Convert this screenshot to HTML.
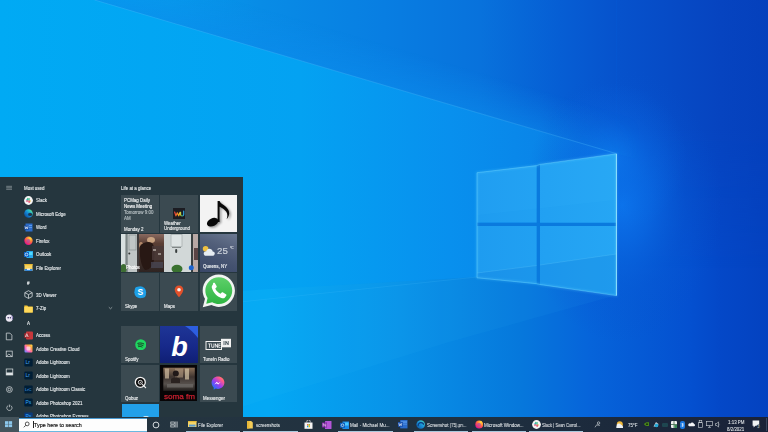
<!DOCTYPE html>
<html><head><meta charset="utf-8">
<style>
*{margin:0;padding:0;box-sizing:border-box}
html,body{width:768px;height:432px;overflow:hidden;-webkit-font-smoothing:antialiased;background:#0a84e0;font-family:"Liberation Sans",sans-serif}
#wall{position:absolute;left:0;top:0;width:768px;height:432px}
#start{position:absolute;left:0;top:177px;width:243px;height:240px;background:#25363e;overflow:hidden}
#task{position:absolute;left:0;top:417px;width:768px;height:15px;background:linear-gradient(90deg,#25353f 0%,#243440 25%,#1f3040 60%,#1c2a3c 78%,#1a2238 100%)}
.tk{will-change:transform;position:absolute;-webkit-text-stroke-width:.05px;color:#e6eaec;font-size:4.45px;line-height:5px;white-space:nowrap}
.ul{position:absolute;top:14px;height:1px;background:#a8c8dc}
.t{will-change:transform;position:absolute;color:#e6eaec;-webkit-text-stroke-width:.12px;font-size:4.45px;white-space:nowrap;line-height:5px}
.ic{position:absolute;width:9px;height:9px}
.tile{position:absolute;background:#3b4a51}
.tt{will-change:transform;position:absolute;-webkit-text-stroke-width:.12px;font-size:4.45px;line-height:5px;white-space:nowrap}
.ic svg{display:block}
</style></head><body>
<svg id="wall" width="768" height="432" viewBox="0 0 768 432">
<defs>
<linearGradient id="bg" x1="0" y1="0" x2="768" y2="0" gradientUnits="userSpaceOnUse"><stop offset="0.0000" stop-color="#00aaf4"/><stop offset="0.3516" stop-color="#04a8f4"/><stop offset="0.5208" stop-color="#0892e8"/><stop offset="0.6771" stop-color="#0678dc"/><stop offset="0.7682" stop-color="#0664da"/><stop offset="0.8984" stop-color="#0450d0"/><stop offset="0.9375" stop-color="#0448c8"/><stop offset="1.0000" stop-color="#0442c0"/></linearGradient>
<linearGradient id="beam" x1="0" y1="0" x2="617" y2="0" gradientUnits="userSpaceOnUse"><stop offset="0.0000" stop-color="#00aaf4"/><stop offset="0.4862" stop-color="#04a2f2"/><stop offset="0.7293" stop-color="#0890ee"/><stop offset="0.9400" stop-color="#0a80e6"/><stop offset="1.0000" stop-color="#0a7ce4"/></linearGradient>
<linearGradient id="wedge" x1="94" y1="0" x2="768" y2="0" gradientUnits="userSpaceOnUse"><stop offset="0.0000" stop-color="#04a2f0"/><stop offset="0.1128" stop-color="#069aec"/><stop offset="0.2463" stop-color="#088ce6"/><stop offset="0.4303" stop-color="#087ee2"/><stop offset="0.5727" stop-color="#0872dc"/><stop offset="0.6914" stop-color="#065ed4"/><stop offset="0.7804" stop-color="#0652cc"/><stop offset="0.9288" stop-color="#0644c0"/><stop offset="1.0000" stop-color="#0540bc"/></linearGradient>
<linearGradient id="vfade" x1="0" y1="0" x2="0" y2="432" gradientUnits="userSpaceOnUse">
<stop offset="0" stop-color="#fff"/><stop offset="0.3" stop-color="#fff"/><stop offset="0.62" stop-color="#000"/><stop offset="1" stop-color="#000"/>
</linearGradient>
<mask id="rmask" maskUnits="userSpaceOnUse" x="0" y="0" width="768" height="432"><rect x="0" y="0" width="768" height="432" fill="url(#vfade)"/></mask>
<linearGradient id="pane" x1="477" y1="0" x2="617" y2="0" gradientUnits="userSpaceOnUse">
<stop offset="0" stop-color="#1e9cf0"/>
<stop offset="1" stop-color="#26a6f4"/>
</linearGradient>
<radialGradient id="glow" gradientUnits="userSpaceOnUse" cx="622" cy="205" r="110" gradientTransform="translate(622 205) scale(0.9 1.25) translate(-622 -205)">
<stop offset="0" stop-color="#0c74ec" stop-opacity="1"/>
<stop offset="0.3" stop-color="#0a68e2" stop-opacity="0.75"/>
<stop offset="0.65" stop-color="#0858d4" stop-opacity="0.3"/>
<stop offset="1" stop-color="#0852cc" stop-opacity="0"/>
</radialGradient>
<radialGradient id="halo" gradientUnits="userSpaceOnUse" cx="612" cy="158" r="75"><stop offset="0" stop-color="#0c7aee" stop-opacity=".7"/><stop offset=".5" stop-color="#0a6ee6" stop-opacity=".3"/><stop offset="1" stop-color="#0a6ee6" stop-opacity="0"/></radialGradient>
<linearGradient id="band" gradientUnits="userSpaceOnUse" x1="400" y1="89.5" x2="411" y2="52"><stop offset="0" stop-color="#0c8cec" stop-opacity=".55"/><stop offset="1" stop-color="#0c8cec" stop-opacity="0"/></linearGradient>
<linearGradient id="hfade" gradientUnits="userSpaceOnUse" x1="540" y1="0" x2="640" y2="0"><stop offset="0" stop-color="#fff"/><stop offset="1" stop-color="#000"/></linearGradient>
<mask id="bmask" maskUnits="userSpaceOnUse" x="0" y="-50" width="768" height="300"><rect x="0" y="-50" width="768" height="300" fill="url(#hfade)"/></mask>
<filter id="eglow" x="-20%" y="-20%" width="140%" height="140%"><feGaussianBlur stdDeviation="1.2"/></filter>
</defs>
<rect width="768" height="432" fill="url(#bg)"/>
<polygon points="0,0 94.5,0 616,153.5 617,295 477,277 0,305" fill="url(#beam)"/>
<polygon points="94.5,0 616.4,0 616.4,153.6" fill="url(#wedge)"/>
<rect x="616.4" y="0" width="152" height="432" fill="url(#wedge)" mask="url(#rmask)"/>
<rect x="500" y="60" width="268" height="300" fill="url(#glow)"/>
<rect x="520" y="60" width="200" height="200" fill="url(#halo)"/>
<polygon points="94.5,0 616.4,153.6 680,172 720,40 200,-30" fill="url(#band)" mask="url(#bmask)"/>
<polygon points="477,277 617,295 446,343 200,420 0,430 0,305" fill="#40c8ff" fill-opacity="0.06"/>
<line x1="94.5" y1="0" x2="616" y2="153.5" stroke="#50c4ff" stroke-opacity="0.4" stroke-width="0.8"/>
<line x1="240" y1="302" x2="477" y2="277" stroke="#50c4ff" stroke-opacity="0.2" stroke-width="0.8"/>
<g fill="url(#pane)">
<polygon points="477,172.7 536.8,165.6 536.8,222.7 477,222.7"/>
<polygon points="540,164.4 616.4,153.8 616.4,223.5 540,223.5"/>
<polygon points="477,226 536.8,226 536.8,283.7 477,277.8"/>
<polygon points="540,226 616.4,226 616.4,295.6 540,284.5"/>
</g>
<polygon points="477,172.7 616.4,153.8 616.4,200 477,215" fill="#40c0ff" fill-opacity="0.08"/>
<path d="M477 273 L536.8 265.5 L540 265 L616.4 254 L616.4 295.6 L540 284.5 L536.8 283.7 L477 277.8Z" fill="#0a70d8" fill-opacity="0.22"/>
<path d="M477 273 L536.8 265.5 M540 265 L616.4 254" stroke="#7ad8ff" stroke-opacity="0.35" stroke-width="0.6"/>
<polygon points="536.8,165.6 540,164.4 540,284.5 536.8,283.7" fill="#0a7ade"/>
<polygon points="477,222.7 616.4,222.7 616.4,226 477,226" fill="#0a7ade"/>
<g fill="none" stroke="#58d0ff" stroke-width="1.8" stroke-opacity="0.3" filter="url(#eglow)">
<polygon points="477,172.7 536.8,165.6 540,164.4 616.4,153.8 616.4,295.6 540,284.5 536.8,283.7 477,277.8"/>
</g>
<g fill="none" stroke="#78dcff" stroke-width="0.7" stroke-opacity="0.55">
<polygon points="477,172.7 536.8,165.6 540,164.4 616.4,153.8 616.4,295.6 540,284.5 536.8,283.7 477,277.8"/>
</g>
<line x1="616.4" y1="153.8" x2="616.4" y2="295.6" stroke="#a0ecff" stroke-width="1" stroke-opacity=".85"/>
</svg>

<div id="start">
<div class="ic" style="left:24px;top:18.7px"><svg width="9" height="9" viewBox="0 0 9 9"><circle cx="4.5" cy="4.5" r="4.4" fill="#f4f4f4"/><rect x="2" y="3.3" width="2.6" height="1" rx=".5" fill="#36c5f0"/><rect x="3.3" y="1.8" width="1" height="2.6" rx=".5" fill="#2eb67d"/><rect x="4.4" y="4.6" width="2.6" height="1" rx=".5" fill="#ecb22e"/><rect x="4.6" y="4.4" width="1" height="2.6" rx=".5" fill="#e01e5a"/><rect x="4.6" y="2" width="1" height="2.4" rx=".5" fill="#2eb67d"/><rect x="2" y="4.6" width="2.4" height="1" rx=".5" fill="#e01e5a"/></svg></div><div class="t" style="left:36px;top:21.2px">Slack</div>
<div class="ic" style="left:24px;top:32.2px"><svg width="9" height="9" viewBox="0 0 9 9"><defs><linearGradient id="eg" x1="0.1" y1="0.9" x2="0.9" y2="0.1"><stop offset="0" stop-color="#0a4a98"/><stop offset=".45" stop-color="#1488d8"/><stop offset=".75" stop-color="#2cc0c8"/><stop offset="1" stop-color="#6ee07a"/></linearGradient></defs><circle cx="4.5" cy="4.5" r="4.3" fill="url(#eg)"/><ellipse cx="6" cy="5.4" rx="2.1" ry="1.6" fill="#12406e"/><ellipse cx="6.6" cy="5.6" rx="1.5" ry="1.1" fill="#25363e"/></svg></div><div class="t" style="left:36px;top:34.7px">Microsoft Edge</div>
<div class="ic" style="left:24px;top:45.8px"><svg width="9" height="9" viewBox="0 0 9 9"><rect x="1.5" y="0.5" width="7" height="8" fill="#2b6ccc"/><rect x="2" y="2" width="6" height="1" fill="#5b9ae8"/><rect x="2" y="4" width="6" height="1" fill="#5b9ae8"/><rect x="0.3" y="2.3" width="4.5" height="4.5" fill="#1a4fa5"/><path d="M1 3.3l.7 2.6.8-2 .8 2 .7-2.6" fill="none" stroke="#fff" stroke-width=".6"/></svg></div><div class="t" style="left:36px;top:48.3px">Word</div>
<div class="ic" style="left:24px;top:59.2px"><svg width="9" height="9" viewBox="0 0 9 9"><defs><radialGradient id="fg" cx=".7" cy=".2" r="1"><stop offset="0" stop-color="#ffde3a"/><stop offset=".45" stop-color="#ff7139"/><stop offset=".8" stop-color="#e31587"/><stop offset="1" stop-color="#9059ff"/></radialGradient></defs><circle cx="4.5" cy="4.8" r="4.2" fill="url(#fg)"/><circle cx="4.3" cy="5" r="2" fill="#a535c8" opacity=".6"/></svg></div><div class="t" style="left:36px;top:61.7px">Firefox</div>
<div class="ic" style="left:24px;top:72.7px"><svg width="9" height="9" viewBox="0 0 9 9"><rect x="2.5" y="1" width="6.5" height="7" fill="#28a8ea"/><rect x="4" y="2" width="4.5" height="3" fill="#50d9ff"/><rect x="0" y="2" width="5" height="5" fill="#0a64c8"/><circle cx="2.5" cy="4.5" r="1.4" fill="none" stroke="#fff" stroke-width=".7"/></svg></div><div class="t" style="left:36px;top:75.2px">Outlook</div>
<div class="ic" style="left:24px;top:86.2px"><svg width="9" height="9" viewBox="0 0 9 9"><rect x="0.5" y="1" width="8" height="7" fill="#f8d460"/><rect x="0.5" y="1" width="8" height="1.3" fill="#e8b830"/><rect x="0.5" y="6" width="8" height="2" fill="#3a8ad8"/><rect x="3" y="5.6" width="3" height="1.2" fill="#fff"/></svg></div><div class="t" style="left:36px;top:88.7px">File Explorer</div>
<div class="t" style="left:26.5px;top:103.6px">#</div>
<div class="ic" style="left:24px;top:113.1px"><svg width="9" height="9" viewBox="0 0 9 9"><path d="M4.5.7L8.2 2.7V6.5L4.5 8.4.8 6.5V2.7Z M.8 2.7L4.5 4.6 8.2 2.7 M4.5 4.6V8.4" fill="none" stroke="#e8ecee" stroke-width=".7"/></svg></div><div class="t" style="left:36px;top:115.6px">3D Viewer</div>
<div class="ic" style="left:24px;top:126.6px"><svg width="9" height="9" viewBox="0 0 9 9"><path d="M.3 1.5h3l.8 1h4.6v6H.3z" fill="#f8c838"/><rect x="0.3" y="3" width="8.4" height="5.5" fill="#ffd95a"/></svg></div><div class="t" style="left:36px;top:129.1px">7-Zip</div>
<div class="t" style="left:26.5px;top:143.6px">A</div>
<div class="ic" style="left:24px;top:153.5px"><svg width="9" height="9" viewBox="0 0 9 9"><rect x="2" y="0.5" width="7" height="8" rx="1" fill="#c8383c"/><rect x="0.3" y="2.2" width="5" height="4.6" fill="#a4262c"/><path d="M1.3 6l1.5-3.4L4.3 6M1.8 5h2" fill="none" stroke="#fff" stroke-width=".6"/></svg></div><div class="t" style="left:36px;top:156.0px">Access</div>
<div class="ic" style="left:24px;top:167.0px"><svg width="9" height="9" viewBox="0 0 9 9"><defs><linearGradient id="ccg" x1="0" y1="1" x2="1" y2="0"><stop offset="0" stop-color="#4a90ff"/><stop offset=".35" stop-color="#ff61c8"/><stop offset=".7" stop-color="#ff9f40"/><stop offset="1" stop-color="#ffe34a"/></linearGradient></defs><rect x="0.5" y="0.5" width="8" height="8" rx="1" fill="url(#ccg)"/><rect x="2.5" y="2.5" width="4" height="4" rx="1" fill="#fff" opacity=".6"/></svg></div><div class="t" style="left:36px;top:169.5px">Adobe Creative Cloud</div>
<div class="ic" style="left:24px;top:180.5px"><svg width="9" height="9" viewBox="0 0 9 9"><rect x="0.3" y="0.5" width="8.4" height="8" rx="1" fill="#001e36"/><text x="1.6" y="6.4" font-family="Liberation Sans" font-size="5" fill="#4aa8f0">Lr</text></svg></div><div class="t" style="left:36px;top:183.0px">Adobe Lightroom</div>
<div class="ic" style="left:24px;top:194.0px"><svg width="9" height="9" viewBox="0 0 9 9"><rect x="0.3" y="0.5" width="8.4" height="8" rx="1" fill="#001e36"/><text x="1.6" y="6.4" font-family="Liberation Sans" font-size="5" fill="#4aa8f0">Lr</text></svg></div><div class="t" style="left:36px;top:196.5px">Adobe Lightroom</div>
<div class="ic" style="left:24px;top:207.5px"><svg width="9" height="9" viewBox="0 0 9 9"><rect x="0.3" y="0.5" width="8.4" height="8" rx="1" fill="#001e36"/><text x="0.9" y="6.4" font-family="Liberation Sans" font-size="4.2" fill="#4aa8f0">LrC</text></svg></div><div class="t" style="left:36px;top:210.0px">Adobe Lightroom Classic</div>
<div class="ic" style="left:24px;top:221.0px"><svg width="9" height="9" viewBox="0 0 9 9"><rect x="0.3" y="0.5" width="8.4" height="8" rx="1" fill="#001e36"/><text x="1.4" y="6.4" font-family="Liberation Sans" font-size="5" fill="#31a8ff">Ps</text></svg></div><div class="t" style="left:36px;top:223.5px">Adobe Photoshop 2021</div>
<div class="ic" style="left:24px;top:234.5px"><svg width="9" height="9" viewBox="0 0 9 9"><rect x="0.3" y="0.5" width="8.4" height="8" rx="1" fill="#0a3a7a"/><text x="1.4" y="6.4" font-family="Liberation Sans" font-size="5" fill="#31a8ff">Ps</text></svg></div><div class="t" style="left:36px;top:237.0px">Adobe Photoshop Express</div>
<div class="t" style="left:24px;top:8.6px">Most used</div>
<div class="t" style="left:121px;top:8.6px">Life at a glance</div>


<svg style="position:absolute;left:0;top:0" width="20" height="240" viewBox="0 0 20 240">
<g fill="none" stroke="#dfe4e6" stroke-width=".7">
<path d="M6.2 9.3h5.8M6.2 10.8h5.8M6.2 12.3h5.8" stroke-width=".5" stroke-opacity=".85"/>
<path d="M6.3 156.1h3.6l2 2v4.7H6.3z"/>
<rect x="6.2" y="174.1" width="6" height="5.6"/>
<path d="M6.6 179.2l2.3-2.2 3 2.4"/>
<rect x="6.2" y="192" width="6.6" height="6"/>
<circle cx="9.4" cy="212.5" r="2.9"/>
<circle cx="9.4" cy="212.5" r="1.3"/>
<path d="M8.1 228.6a2.6 2.6 0 1 0 2.6 0M9.4 227.6v2.6"/>
</g>
<rect x="6.2" y="195.5" width="6.6" height="2.5" fill="#dfe4e6"/>
<circle cx="9.3" cy="141.1" r="3.6" fill="#ece8f4"/>
<circle cx="8.2" cy="140.8" r=".8" fill="#3a3060"/>
<circle cx="10.4" cy="140.8" r=".8" fill="#3a3060"/>
<path d="M11.5 138.5a3.3 3.3 0 0 1 .8 4" stroke="#6a5aa8" stroke-width=".8" fill="none"/>
<path d="M108.5 130.2l1.6 1.5 1.6-1.5" stroke="#c0c8cc" stroke-width=".6" fill="none"/>
</svg>
<svg style="position:absolute;left:108px;top:129px" width="5" height="4" viewBox="0 0 5 4"><path d="M.8 1.2l1.7 1.6 1.7-1.6" stroke="#c8cfd2" stroke-width=".6" fill="none"/></svg>
<!-- tiles group 1 -->
<div class="tile" style="left:121px;top:18px;width:37.6px;height:37.7px"></div>
<div class="tt" style="left:124px;top:20.8px;color:#f0f2f3">PCMag Daily</div>
<div class="tt" style="left:124px;top:26.6px;color:#ffffff">News Meeting</div>
<div class="tt" style="left:124px;top:33.0px;color:#b8c0c4">Tomorrow 9:00</div>
<div class="tt" style="left:124px;top:39.4px;color:#b8c0c4">AM</div>
<div class="tt" style="left:124px;top:49.6px;color:#f0f2f3">Monday 2</div>

<div class="tile" style="left:160.2px;top:18px;width:37.8px;height:37.7px"></div>
<div style="position:absolute;left:173px;top:30.5px;width:12.3px;height:11.2px;background:#1c1c22"></div>
<svg style="position:absolute;left:173px;top:30.5px" width="12.3" height="11.2" viewBox="0 0 12.3 11.2"><defs><linearGradient id="wug" x1="0" x2="1"><stop offset="0" stop-color="#e83a3a"/><stop offset=".35" stop-color="#f09020"/><stop offset=".6" stop-color="#e8d030"/><stop offset=".8" stop-color="#50c060"/><stop offset="1" stop-color="#2a9ee8"/></linearGradient></defs><path d="M1.6 4l1.3 3.8 1.4-3 1.4 3 1.3-3.4M7.6 4.3v2.2c0 1.3 1.1 1.5 1.6 1.5s1.5-.3 1.5-1.5V3" fill="none" stroke="url(#wug)" stroke-width="1.2" stroke-linecap="round" stroke-linejoin="round"/></svg>
<div class="tt" style="left:163.7px;top:43.6px;color:#f0f2f3">Weather</div>
<div class="tt" style="left:163.7px;top:49.3px;color:#f0f2f3">Underground</div>

<div class="tile" style="left:199.6px;top:18.2px;width:37.6px;height:37.2px;background:#f3f3f3"></div>
<svg style="position:absolute;left:199.6px;top:18.2px" width="37.6" height="37.2" viewBox="0 0 37.6 37.2">
<defs><filter id="nsh" x="-50%" y="-50%" width="200%" height="200%"><feGaussianBlur stdDeviation="1.3"/></filter></defs>
<g transform="translate(1.6 1.2)" opacity=".4" filter="url(#nsh)"><ellipse cx="12.6" cy="27.2" rx="6" ry="3.9" transform="rotate(-25 12.6 27.2)" fill="#000"/><path d="M17.6 27V6h2c1.4 4 9.8 5.5 9.6 12.5-.1 2.2-1 4-2.6 5.8 1.1-2.6 1.1-5.5-.4-7.8-1.6-2.4-5-3.8-6.6-4.8V27z" fill="#000"/></g>
<ellipse cx="12.6" cy="27.2" rx="6" ry="3.9" transform="rotate(-25 12.6 27.2)" fill="#080808"/>
<path d="M17.6 27V6h2c1.4 4 9.8 5.5 9.6 12.5-.1 2.2-1 4-2.6 5.8 1.1-2.6 1.1-5.5-.4-7.8-1.6-2.4-5-3.8-6.6-4.8V27z" fill="#080808"/>
</svg>

<!-- photos wide tile -->
<div style="position:absolute;left:121.2px;top:57px;width:76.9px;height:37.6px;overflow:hidden;background:#c8ccca">
<svg width="77" height="38" viewBox="0 0 77 38">
<defs>
<linearGradient id="wall1" x1="0" x2="0" y1="0" y2="1"><stop offset="0" stop-color="#d0d6d6"/><stop offset="1" stop-color="#b8bebe"/></linearGradient>
<linearGradient id="intr" x1="0" x2="0" y1="0" y2="1"><stop offset="0" stop-color="#8a6a60"/><stop offset=".25" stop-color="#5a3e34"/><stop offset="1" stop-color="#2e2422"/></linearGradient>
</defs>
<rect width="77" height="38" fill="url(#wall1)"/>
<rect x="0" y="0" width="4" height="38" fill="#d8e0e0"/>
<rect x="4.5" y="0" width="2.2" height="38" fill="#7a8484"/>
<rect x="7" y="0" width="9" height="38" fill="#c0c6c6"/>
<rect x="8" y="1" width="7" height="15" fill="none" stroke="#8a9292" stroke-width=".7"/>
<circle cx="8.3" cy="19.5" r="1" fill="#303434"/>
<rect x="16" y="0" width="2" height="38" fill="#3e3a3a"/>
<rect x="18" y="0" width="26" height="38" fill="url(#intr)"/>
<ellipse cx="30" cy="6" rx="4" ry="3" fill="#e0b890" opacity=".8"/>
<ellipse cx="20" cy="11" rx="2" ry="3" fill="#d8a880" opacity=".7"/>
<path d="M19 12c3-4 9-5 12-3 3 3 3 10 2 17-1 5-4 10-9 10-4-4-6-14-5-24z" fill="#281814"/>
<rect x="31" y="12" width="12" height="14" fill="#4a3a38" opacity=".8"/>
<rect x="32" y="15" width="3" height="2" fill="#d0c8c0" opacity=".6"/>
<rect x="37" y="19" width="3" height="2" fill="#c8c0b8" opacity=".6"/>
<rect x="30" y="28" width="12" height="6" fill="#4a4a58" opacity=".7"/>
<rect x="43" y="0" width="6" height="38" fill="#ccd2d2"/>
<rect x="49" y="0" width="21" height="38" fill="#d2d8d8"/>
<rect x="50" y="0.5" width="11" height="12" fill="#dde3e3" stroke="#9aa2a2" stroke-width=".6"/>
<path d="M51 13.5h9" stroke="#606666" stroke-width=".7"/>
<rect x="54.2" y="15" width="2" height="4" rx="1" fill="#383e3e"/>
<rect x="70" y="0" width="2" height="38" fill="#3a4040"/>
<rect x="72" y="0" width="5" height="38" fill="#b8a8a4"/>
<rect x="73" y="14" width="4" height="12" fill="#5a4444"/>
<ellipse cx="2.5" cy="34.5" rx="3" ry="4.5" fill="#3e6e34"/>
<ellipse cx="56" cy="35" rx="5.5" ry="4.2" fill="#3a7230"/>
<circle cx="70.3" cy="33.8" r="2.5" fill="#1a64d0"/>
</svg>
<div class="tt" style="left:4.6px;top:30.8px;color:#fff">Photos</div>
</div>

<!-- weather queens -->
<div style="position:absolute;left:199.6px;top:57px;width:37.6px;height:37.6px;background:linear-gradient(200deg,#6a7890 0%,#525f7a 35%,#445270 65%,#3a4868 100%);overflow:hidden">
<svg width="38" height="38" viewBox="0 0 38 38" style="position:absolute;left:0;top:0">
<circle cx="5.6" cy="14.8" r="2.8" fill="#f0c040"/>
<path d="M4.2 21.8h8.2c1.5 0 2.4-1 2.4-2.2s-.9-2.1-2.1-2.1c-.3-1.7-1.7-2.7-3.2-2.7-1.7 0-2.9 1.2-3.2 2.5-1.5 0-2.6 1-2.6 2.2s.9 2.3 2 2.3z" fill="#e6ecf2"/>
</svg>
<div class="tt" style="left:17.8px;top:11.6px;font-size:9.7px;line-height:10px;color:#dfe4ea;opacity:.88">25</div>
<div class="tt" style="left:30.4px;top:12.2px;font-size:3.2px;line-height:4px;color:#dfe4ea">°C</div>
<div class="tt" style="left:3px;top:30.4px;color:#f4f6f8">Queens, NY</div>
</div>

<div class="tile" style="left:121px;top:96px;width:37.6px;height:37.5px"></div>
<svg style="position:absolute;left:134px;top:109px" width="12.5" height="12.5" viewBox="0 0 12.5 12.5"><circle cx="6.25" cy="6.25" r="5.9" fill="#1ea0e8"/><circle cx="3.8" cy="3.8" r="3" fill="#1ea0e8"/><circle cx="8.7" cy="8.7" r="3" fill="#1ea0e8"/><text x="6.25" y="9.2" text-anchor="middle" font-family="Liberation Sans" font-weight="bold" font-size="8.5" fill="#fff">S</text></svg>
<div class="tt" style="left:124.6px;top:126.6px;color:#f0f2f3">Skype</div>

<div class="tile" style="left:160.2px;top:96px;width:37.8px;height:37.5px"></div>
<svg style="position:absolute;left:173.9px;top:108.4px" width="10" height="12.7" viewBox="0 0 11 14"><path d="M5.5.5C2.7.5.8 2.6.8 5.2c0 3.2 4.7 8.3 4.7 8.3s4.7-5.1 4.7-8.3C10.2 2.6 8.3.5 5.5.5z" fill="#e2502a"/><circle cx="5.5" cy="5.2" r="2" fill="#f8f0ec"/></svg>
<div class="tt" style="left:163.5px;top:126.6px;color:#f0f2f3">Maps</div>

<div class="tile" style="left:199.6px;top:96px;width:37.6px;height:37.5px"></div>
<svg style="position:absolute;left:199.6px;top:96px" width="37.6" height="37.5" viewBox="0 0 37.6 37.5">
<defs><linearGradient id="wag" x1="0" y1="0" x2="0" y2="1"><stop offset="0" stop-color="#5ed06a"/><stop offset="1" stop-color="#2eb542"/></linearGradient></defs>
<g transform="translate(18.8 17.6) scale(1.17) translate(-18 -18)">
<path d="M18 4.2c-7.6 0-13.8 6.1-13.8 13.7 0 2.6.7 5 2 7.1L4.3 32.3l7.5-1.9c1.9 1 4 1.6 6.2 1.6 7.6 0 13.8-6.1 13.8-13.8S25.6 4.2 18 4.2z" fill="#f2f4f2"/>
<path d="M18 6.5c-6.4 0-11.5 5.1-11.5 11.4 0 2.4.7 4.6 1.9 6.5L7.3 29.2l5.1-1.3c1.7 1 3.6 1.5 5.6 1.5 6.4 0 11.5-5.1 11.5-11.5S24.4 6.5 18 6.5z" fill="url(#wag)"/>
<path d="M13.2 11.5c.4-.4 1.1-.4 1.4.1l1.5 2.4c.3.5.2 1-.2 1.4l-.9.8c.8 2 2.4 3.6 4.4 4.5l.9-.9c.4-.4 1-.5 1.4-.2l2.4 1.5c.5.3.6 1 .2 1.4l-1 1.3c-.6.7-1.6 1-2.5.7-4.2-1.3-7.4-4.6-8.7-8.8-.3-.9 0-1.9.7-2.5z" fill="#fff"/>
</g></svg>

<!-- group 2 -->
<div class="tile" style="left:121px;top:148.5px;width:37.6px;height:37.5px"></div>
<svg style="position:absolute;left:134.5px;top:161.5px" width="11.5" height="11.5" viewBox="0 0 11.5 11.5"><circle cx="5.75" cy="5.75" r="5.5" fill="#1ed760"/><path d="M2.8 4.3c2-.6 4.3-.4 6 .6M3.2 6c1.6-.4 3.4-.3 4.8.5M3.6 7.6c1.2-.3 2.4-.2 3.5.4" fill="none" stroke="#191414" stroke-width=".8" stroke-linecap="round"/></svg>
<div class="tt" style="left:124.6px;top:180.2px;color:#f0f2f3">Spotify</div>

<div style="position:absolute;left:160.2px;top:148.8px;width:37.8px;height:37.2px;background:linear-gradient(180deg,#1e3596 0%,#17298a 55%,#0f1f74 100%);overflow:hidden">
<svg width="38" height="38" viewBox="0 0 38 38" style="position:absolute;left:0;top:0">
<path d="M25 0H38V12C34 7 30 3 25 0z" fill="#2d5ee0"/>
<text x="19.5" y="30" text-anchor="middle" font-family="Liberation Sans" font-style="italic" font-weight="bold" font-size="27" fill="#fff">b</text>
</svg>
</div>

<div class="tile" style="left:199.6px;top:148.5px;width:37.6px;height:37.5px"></div>
<svg style="position:absolute;left:205px;top:161px" width="27" height="12" viewBox="0 0 27 12">
<rect x="1" y="3.5" width="15.5" height="8" fill="none" stroke="#f2f2f2" stroke-width="1"/>
<g fill="#f2f2f2"><path d="M3.2 5.6h2.6v.7h-.9v3.4h-.8V6.3h-.9z"/><path d="M6.3 5.6h.8v2.6c0 .5.3.8.7.8s.7-.3.7-.8V5.6h.8v2.6c0 1-.6 1.6-1.5 1.6S6.3 9.2 6.3 8.2z"/><path d="M9.8 5.6h.8l1.6 2.7V5.6h.8v4.1h-.8l-1.6-2.7v2.7h-.8z"/><path d="M13.4 5.6h2.2v.7h-1.4v.95h1.3v.7h-1.3v1h1.4v.7h-2.2z"/></g>
<rect x="16" y="0.8" width="10" height="8.5" fill="#f2f2f2"/>
<g fill="#34444c"><rect x="18.6" y="3" width=".8" height="4.1"/><path d="M20.4 3h.8l1.6 2.7V3h.8v4.1h-.8l-1.6-2.7v2.7h-.8z"/></g>
</svg>
<div class="tt" style="left:203.2px;top:180.4px;color:#f0f2f3">TuneIn Radio</div>

<div class="tile" style="left:121px;top:187.5px;width:37.6px;height:37.5px"></div>
<svg style="position:absolute;left:134px;top:199px" width="13" height="13" viewBox="0 0 13 13"><circle cx="6.3" cy="6.3" r="5" fill="#0c0c0c" stroke="#f2f2f2" stroke-width="1.3"/><circle cx="6.3" cy="6.3" r="2" fill="none" stroke="#f2f2f2" stroke-width=".9"/><circle cx="6.3" cy="6.3" r=".6" fill="#f2f2f2"/><path d="M8.6 8.6l3 3" stroke="#f2f2f2" stroke-width="1.3" stroke-linecap="round"/></svg>
<div class="tt" style="left:124.6px;top:218.9px;color:#f0f2f3">Qobuz</div>

<div style="position:absolute;left:160.3px;top:188px;width:37px;height:36.2px;background:#070506;overflow:hidden">
<svg width="37" height="37" viewBox="0 0 37 37" style="position:absolute;left:0;top:0">
<defs><linearGradient id="sph" x1="0" y1="0" x2="0" y2="1"><stop offset="0" stop-color="#8a7058"/><stop offset=".4" stop-color="#3e3430"/><stop offset=".7" stop-color="#56504c"/><stop offset="1" stop-color="#221e1c"/></linearGradient></defs>
<rect x="3.3" y="2.7" width="31.5" height="23.2" fill="url(#sph)"/>
<rect x="5" y="3.5" width="4" height="10" fill="#c8b49a" opacity=".75"/>
<rect x="15" y="3.5" width="8" height="9" fill="#b09a80" opacity=".6"/>
<rect x="25" y="3.5" width="4" height="11" fill="#d8c8a8" opacity=".7"/>
<circle cx="15.8" cy="8.6" r="3" fill="#201818"/>
<path d="M11 14c2-2 7-2 9 0v4h-9z" fill="#2a2220"/>
<rect x="7" y="19" width="26" height="3.5" fill="#6a6664" opacity=".8"/>
</svg>
<div class="tt" style="left:3.5px;top:27px;font-size:8.1px;line-height:9px;color:#cc2030;-webkit-text-stroke:.25px #cc2030">soma fm</div>
</div>

<div class="tile" style="left:199.6px;top:187.5px;width:37.6px;height:37.5px"></div>
<svg style="position:absolute;left:210.7px;top:199px" width="14" height="14" viewBox="0 0 14 14"><defs><linearGradient id="msg" x1="0.1" y1="0.95" x2="0.9" y2="0.05"><stop offset="0" stop-color="#0a7cff"/><stop offset=".45" stop-color="#9a3cf0"/><stop offset=".8" stop-color="#ff5a8a"/><stop offset="1" stop-color="#ff8a5a"/></linearGradient></defs><path d="M7 .5C3.4.5.6 3.2.6 6.8c0 1.9.8 3.5 2.1 4.7v2.2l2-1.1c.7.2 1.5.3 2.3.3 3.6 0 6.4-2.7 6.4-6.3S10.6.5 7 .5z" fill="url(#msg)"/><path d="M3.3 8.6l2.5-2.8 1.4 1.4 2.5-1.4-2.5 2.8-1.4-1.4z" fill="#fff"/></svg>
<div class="tt" style="left:203.2px;top:218.9px;color:#f0f2f3">Messenger</div>

<div style="position:absolute;left:121.5px;top:226.8px;width:37.9px;height:14px;background:#22a0ea;overflow:hidden"><div style="position:absolute;left:21px;top:12.6px;width:6px;height:4px;border-radius:2px;background:#c8e8fa"></div></div>
</div>
<div id="task">
<div style="position:absolute;left:0;top:0;width:18.5px;height:15px;background:#44545c"></div>
<svg style="position:absolute;left:5.3px;top:4.3px" width="7.4" height="6.4" viewBox="0 0 8 6.5"><g fill="#8cc8ec"><rect x="0" y="0" width="3.6" height="3"/><rect x="4.1" y="0" width="3.6" height="3"/><rect x="0" y="3.4" width="3.6" height="3"/><rect x="4.1" y="3.4" width="3.6" height="3"/></g></svg>
<div style="position:absolute;left:18.5px;top:0.6px;width:128px;height:14.2px;background:#fdfdfd;border-top:1px solid #4a9ad0;border-bottom:1px solid #6ab8e0"></div>
<svg style="position:absolute;left:22.5px;top:4px" width="7" height="7" viewBox="0 0 7 7"><circle cx="4.2" cy="2.9" r="1.9" fill="none" stroke="#222" stroke-width=".75"/><path d="M2.8 4.3L.8 6.3" stroke="#222" stroke-width=".8"/></svg>
<div style="position:absolute;left:32.8px;top:4.2px;width:.5px;height:6.5px;background:#222"></div>
<div class="tk" style="left:33.5px;top:4.5px;font-size:5.4px;line-height:6px;color:#111;-webkit-text-stroke:.15px #111">Type here to search</div>
<svg style="position:absolute;left:152px;top:3.5px" width="8" height="8" viewBox="0 0 8 8"><circle cx="4" cy="4" r="2.9" fill="none" stroke="#e8ecee" stroke-width=".9"/></svg>
<svg style="position:absolute;left:170px;top:4px" width="8" height="7" viewBox="0 0 8 7"><g fill="none" stroke="#dfe4e6" stroke-width=".7"><rect x=".8" y="1" width="3.5" height="2"/><rect x=".8" y="4" width="3.5" height="2"/><path d="M5.8.5v6M7.2.5v6"/></g></svg>

<svg style="position:absolute;left:188.3px;top:4.2px" width="8.5" height="6.2" viewBox="0 0 8.5 6.2"><rect x="0" y="0" width="8.5" height="6.2" fill="#f8d668"/><rect x="0" y="0" width="8.5" height="1.2" fill="#e6b838"/><rect x="1" y="3.6" width="6.5" height="2" fill="#5a9ad0"/></svg>
<div class="tk" style="left:198.2px;top:6.2px">File Explorer</div>
<div class="ul" style="left:185.7px;width:54.6px"></div>

<svg style="position:absolute;left:246.7px;top:4px" width="6" height="7.5" viewBox="0 0 6 7.5"><path d="M0 0h4.2l1.6 1.5V7.5H0z" fill="#f4cc58"/><rect x="0" y="0" width="2.5" height="7.5" fill="#e8b838"/></svg>
<div class="tk" style="left:255.6px;top:6.2px">screenshots</div>
<div class="ul" style="left:243.2px;width:55px"></div>

<svg style="position:absolute;left:303.8px;top:3px" width="9" height="9" viewBox="0 0 9 9"><path d="M2.8 2.5V1.5a1.7 1.7 0 0 1 3.4 0v1" fill="none" stroke="#f4f4f4" stroke-width=".7"/><rect x=".5" y="2.5" width="8" height="6.3" fill="#f4f4f4"/><rect x="3" y="4.2" width="1.4" height="1.4" fill="#f25022"/><rect x="4.6" y="4.2" width="1.4" height="1.4" fill="#7fba00"/><rect x="3" y="5.8" width="1.4" height="1.4" fill="#00a4ef"/><rect x="4.6" y="5.8" width="1.4" height="1.4" fill="#ffb900"/></svg>

<svg style="position:absolute;left:322.2px;top:3.7px" width="10" height="8" viewBox="0 0 10 8"><rect x="3" y="0" width="6.5" height="8" rx=".5" fill="#b455d8"/><rect x="0" y="1.5" width="5" height="5" fill="#7a1fa0"/><path d="M1.2 5.5V2.5l2.6 3v-3" fill="none" stroke="#fff" stroke-width=".6"/></svg>

<svg style="position:absolute;left:340.1px;top:3.5px" width="9" height="8.5" viewBox="0 0 9 8.5"><rect x="2.5" y=".5" width="6.5" height="7.5" fill="#1a8ae8"/><rect x="4" y="1.5" width="4.5" height="3" fill="#48c8ff"/><rect x="0" y="1.8" width="5" height="5" fill="#0a5cb8"/><circle cx="2.5" cy="4.3" r="1.3" fill="none" stroke="#fff" stroke-width=".6"/></svg>
<div class="tk" style="left:350.2px;top:6.2px;transform:scaleX(1.03);transform-origin:0 0">Mail - Michael Mu...</div>
<div class="ul" style="left:337.7px;width:55.2px"></div>

<svg style="position:absolute;left:398.2px;top:3.3px" width="9.5" height="8.4" viewBox="0 0 9.5 8.4"><rect x="2.2" y="0" width="7.3" height="8.4" fill="#2b6ccc"/><rect x="2.8" y="1.4" width="6.2" height="1.2" fill="#5fa0f0"/><rect x="2.8" y="3.6" width="6.2" height="1.2" fill="#4a8ae0"/><rect x="0" y="2" width="5" height="4.8" fill="#1a52b0"/><path d="M.8 3l.7 2.8.8-2 .8 2 .7-2.8" fill="none" stroke="#fff" stroke-width=".55"/></svg>

<svg style="position:absolute;left:415.8px;top:3.3px" width="9.4" height="9" viewBox="0 0 9.4 9"><defs><linearGradient id="eg2" x1="0" y1="1" x2="1" y2="0"><stop offset="0" stop-color="#0c4e9c"/><stop offset=".5" stop-color="#1890d8"/><stop offset=".8" stop-color="#36c0c8"/><stop offset="1" stop-color="#60e070"/></linearGradient></defs><circle cx="4.7" cy="4.5" r="4.3" fill="url(#eg2)"/><path d="M2.2 6.2c-.4-2 1-3.6 2.8-3.6 1.5 0 2.6 1 2.6 2.2" fill="none" stroke="#0a3a80" stroke-width="1.1"/></svg>
<div class="tk" style="left:426.8px;top:6.2px;transform:scaleX(.953);transform-origin:0 0">Screenshot (75).pn...</div>
<div class="ul" style="left:414.3px;width:54.2px"></div>

<svg style="position:absolute;left:474.8px;top:3.4px" width="8.5" height="8.5" viewBox="0 0 9 9"><defs><radialGradient id="fg2" cx=".7" cy=".2" r="1"><stop offset="0" stop-color="#ffde3a"/><stop offset=".45" stop-color="#ff7139"/><stop offset=".8" stop-color="#e31587"/><stop offset="1" stop-color="#9059ff"/></radialGradient></defs><circle cx="4.5" cy="4.8" r="4.2" fill="url(#fg2)"/><circle cx="4.3" cy="5" r="2" fill="#a535c8" opacity=".6"/></svg>
<div class="tk" style="left:484px;top:6.2px;transform:scaleX(1.03);transform-origin:0 0">Microsoft Window...</div>
<div class="ul" style="left:471.7px;width:54.1px"></div>

<svg style="position:absolute;left:531.7px;top:3.3px" width="9" height="9" viewBox="0 0 9 9"><circle cx="4.5" cy="4.5" r="4.4" fill="#f4f4f4"/><rect x="2" y="3.3" width="2.6" height="1" rx=".5" fill="#36c5f0"/><rect x="3.3" y="1.8" width="1" height="2.6" rx=".5" fill="#2eb67d"/><rect x="4.4" y="4.6" width="2.6" height="1" rx=".5" fill="#ecb22e"/><rect x="4.6" y="4.4" width="1" height="2.6" rx=".5" fill="#e01e5a"/><rect x="4.6" y="2" width="1" height="2.4" rx=".5" fill="#2eb67d"/><rect x="2" y="4.6" width="2.4" height="1" rx=".5" fill="#e01e5a"/></svg>
<div class="tk" style="left:541.9px;top:6.2px;transform:scaleX(.92);transform-origin:0 0">Slack | Sean Carrol...</div>
<div class="ul" style="left:529.4px;width:54.1px"></div>

<svg style="position:absolute;left:593.5px;top:4px" width="7" height="7" viewBox="0 0 7 7"><g fill="none" stroke="#c8d0d4" stroke-width=".7"><circle cx="4.6" cy="2" r="1.2"/><path d="M1 6.3l1.8-2.6 1.5.8M3.8 3.6l2 1"/></g></svg>
<svg style="position:absolute;left:615.9px;top:3.7px" width="7.6" height="7.6" viewBox="0 0 7.6 7.6"><circle cx="3.8" cy="3.3" r="3" fill="#f0b838"/><path d="M.3 7.4h6.8c.2-1.8-.6-3.4-2-3.6-.6-1-1.6-1.4-2.6-1.2C1 2.9.2 4.6.3 7.4z" fill="#eef2f6"/></svg>
<div class="tk" style="left:627.5px;top:6.2px;color:#e0e6ea">75°F</div>

<svg style="position:absolute;left:643.8px;top:5.3px" width="5.4" height="4.4" viewBox="0 0 5.4 4.4"><path d="M0 2.2C1 .6 3 0 5.4.4v3.6C3 4.4 1 3.8 0 2.2z" fill="#4a8a18"/><ellipse cx="3" cy="2.2" rx="1.2" ry=".9" fill="#1e3a10"/></svg>
<svg style="position:absolute;left:652.8px;top:4px" width="6" height="7" viewBox="0 0 6 7"><path d="M.5 5.5L3 1l2.5 2-1 3z" fill="#b8c8d4"/><circle cx="3.5" cy="4.5" r="1.8" fill="#22a8d8"/></svg>
<div style="position:absolute;left:662px;top:6px;width:5.8px;height:3.5px;background:#1e4650;border-radius:1px"></div>
<svg style="position:absolute;left:670.9px;top:4px" width="6" height="7" viewBox="0 0 6 7"><rect x="0" y="0" width="6" height="7" rx="1" fill="#f0f0f0"/><path d="M3 0v7M0 3.5h6" stroke="#3a6a48" stroke-width=".8"/><rect x="3.4" y="4" width="2.6" height="3" fill="#3a8a58"/></svg>
<svg style="position:absolute;left:679.8px;top:3.5px" width="5" height="8" viewBox="0 0 5 8"><rect x="0" y="0" width="5" height="8" rx="2" fill="#1a78e0"/><path d="M1.2 2.4l2.4 2.4-1.1 1.1V2l1.1 1.1-2.4 2.4" fill="none" stroke="#fff" stroke-width=".5"/></svg>
<svg style="position:absolute;left:688px;top:5px" width="7" height="4.5" viewBox="0 0 7 4.5"><path d="M1.2 4.3h4.6a1.1 1.1 0 0 0 .2-2.2A1.9 1.9 0 0 0 2.5 1.4 1.5 1.5 0 0 0 1.2 4.3z" fill="#f2f4f6"/></svg>
<svg style="position:absolute;left:698px;top:3.3px" width="5" height="8" viewBox="0 0 5 8"><g fill="none" stroke="#d0d6da" stroke-width=".6"><rect x="1.2" y=".5" width="2.6" height="2.2"/><rect x=".6" y="2.7" width="3.8" height="4.8"/></g></svg>
<svg style="position:absolute;left:706.3px;top:3.8px" width="7" height="7" viewBox="0 0 7 7"><g fill="none" stroke="#d0d6da" stroke-width=".6"><rect x=".4" y=".5" width="6.2" height="4.2"/><path d="M3.5 4.7v1.6M2 6.4h3"/></g></svg>
<svg style="position:absolute;left:714.9px;top:3.8px" width="6" height="7" viewBox="0 0 6 7"><g fill="none" stroke="#d0d6da" stroke-width=".6"><path d="M.5 2.5h1.4L3.5.8v5.4L1.9 4.5H.5z"/><path d="M4.6 2.5v2" stroke-opacity=".4"/></g></svg>
<div class="tk" style="left:728.2px;top:2.5px;color:#e8ecee">1:13 PM</div>
<div class="tk" style="left:726.6px;top:9.6px;color:#e8ecee">8/2/2021</div>
<svg style="position:absolute;left:752px;top:3.2px" width="9" height="9" viewBox="0 0 9 9"><path d="M.6.6h6.6v5.2H3.4L1.6 7.4V5.8H.6z" fill="#f0f2f4"/><circle cx="6.5" cy="6.5" r="2" fill="#2a3440"/><text x="6.5" y="8" text-anchor="middle" font-size="3.6" font-family="Liberation Sans" fill="#e0e6ea">2</text></svg>
<div style="position:absolute;left:766.2px;top:1px;width:.6px;height:13px;background:#3a4660"></div>
</div>
</body></html>
